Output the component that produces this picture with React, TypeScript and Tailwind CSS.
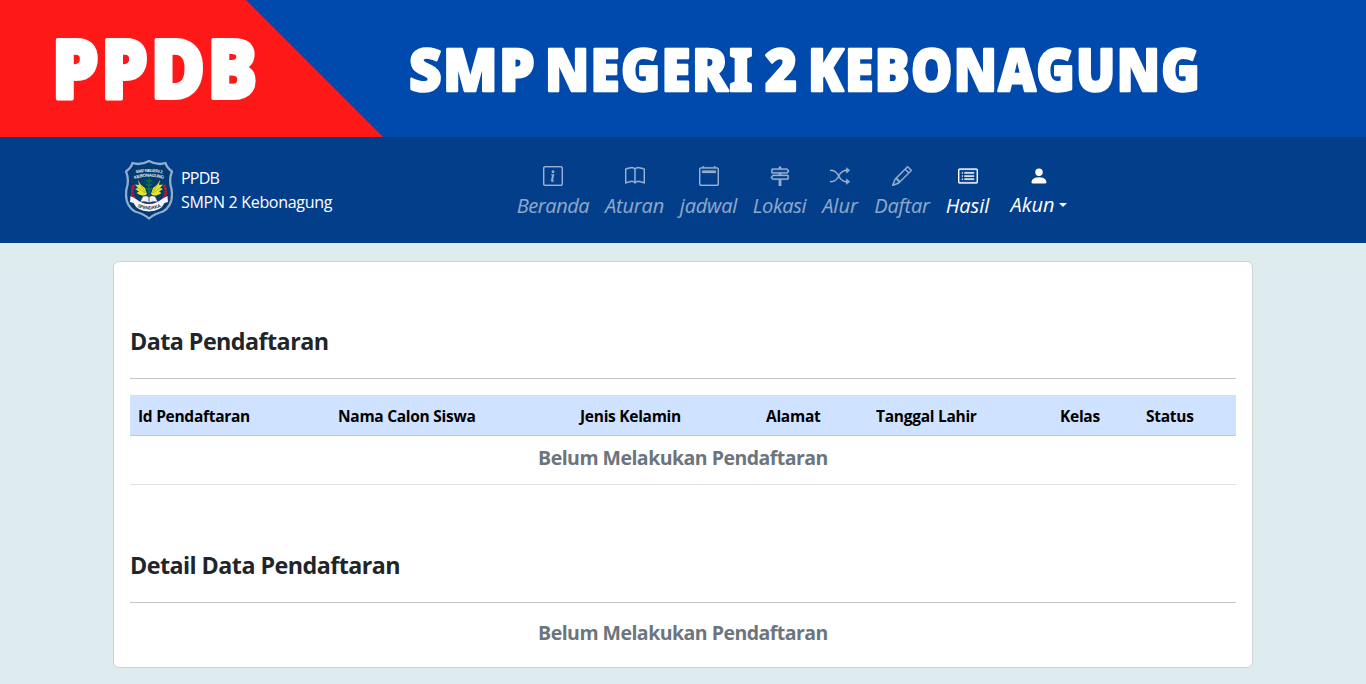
import type { ReactNode } from "react";
import {
  BsBook,
  BsCalendar2,
  BsCardList,
  BsInfoSquare,
  BsPencil,
  BsPersonFill,
  BsShuffle,
  BsSignpost2,
} from "react-icons/bs";

function Banner() {
  return (
    <svg
      viewBox="0 0 1366 137"
      className="block h-[137px] w-full bg-[#004aad] font-['Noto_Sans',sans-serif] font-black"
      role="img"
      aria-label="PPDB SMP Negeri 2 Kebonagung"
    >
      <polygon points="0,0 246,0 383,137 0,137" fill="#ff1818" />
      <g fill="#fff" stroke="#fff" strokeLinejoin="round">
        <text x="52" y="97.500" fontSize="82" strokeWidth="4" letterSpacing="3" textLength="208" lengthAdjust="spacingAndGlyphs">PPDB</text>
        <g fontSize="59" strokeWidth="2.500">
          <text x="409" y="90.500" letterSpacing="1.500" textLength="127" lengthAdjust="spacingAndGlyphs">SMP</text>
          <text x="545" y="90.500" letterSpacing="1.500" textLength="209" lengthAdjust="spacingAndGlyphs">NEGERI</text>
          <text x="765" y="90.500" textLength="32" lengthAdjust="spacingAndGlyphs">2</text>
          <text x="808" y="90.500" letterSpacing="1.500" textLength="393" lengthAdjust="spacingAndGlyphs">KEBONAGUNG</text>
        </g>
      </g>
    </svg>
  );
}

const shield =
  "M7.5 3.2 Q16 5.5 24 1 Q32 5.5 40.500 3.200 Q42 8 47 11.500 Q43.500 20 46.500 29 Q49 45 38 51.500 Q29 54 24 58.500 Q19 54 10 51.500 Q-1 45 1.500 29 Q4.500 20 1 11.500 Q6 8 7.500 3.200Z";

function Crest() {
  return (
    <svg viewBox="0 0 48 60" className="h-[60px] w-12 shrink-0" aria-hidden="true">
      <defs>
        <path id="crest-top" d="M8 14 Q24 10 40 14" />
        <path id="crest-mid" d="M6.500 20 Q24 13.500 41.500 20" />
        <path id="crest-ribbon" d="M9 43.500 Q24 53 39 43.500" />
      </defs>
      <path d={shield} fill="#043a70" stroke="#8fadd2" strokeWidth="2.300" />
      <g className="font-['Liberation_Sans',sans-serif] font-bold" fill="#e5edf7">
        <text fontSize="4.200" textAnchor="middle">
          <textPath href="#crest-top" startOffset="50%">SMP NEGERI 2</textPath>
        </text>
        <text fontSize="4.400" textAnchor="middle">
          <textPath href="#crest-mid" startOffset="50%">KEBONAGUNG</textPath>
        </text>
      </g>
      <g fill="none" stroke="#d31932" strokeWidth="2.600" strokeDasharray="2.200 .7">
        <path d="M9 25 Q5 33 10 39" />
        <path d="M39 25 Q43 33 38 39" />
      </g>
      <path d="M24 18v19M24 22l-3-2M24 22l3-2M24 26l-3-2M24 26l3-2M24 30l-3-2M24 30l3-2" stroke="#087943" strokeWidth="1.300" />
      <path d="M13 19 Q14 24 20 28 L22 34 Q19 37 14 34.500 L11.500 33 L14 31.500 L10 29 L13 28 L10 24.500 L14 25Z" fill="#e6e42c" />
      <path d="M35 19 Q34 24 28 28 L26 34 Q29 37 34 34.500 L36.500 33 L34 31.500 L38 29 L35 28 L38 24.500 L34 25Z" fill="#e6e42c" />
      <path d="M13 21l8 12M12 27l8 6M35 21l-8 12M36 27l-8 6" stroke="#8aa42d" strokeWidth=".6" />
      <path d="M18 36q4-1 6 1 2-2 6-1l3 6q-6-1-9 1-3-2-9-1Z" fill="#f0f2f5" stroke="#273750" strokeWidth=".7" />
      <path d="M24 37v6" stroke="#273750" strokeWidth=".8" />
      <path d="M5.500 36 L11 39 Q17 44 24 44 Q31 44 37 39 L42.500 36 L43 42 L39.500 43 Q36 51 24 51.500 Q12 51 8.500 43 L5 42Z" fill="#f5f6f7" />
      <text fontSize="4.600" className="font-['Liberation_Sans',sans-serif] font-bold" fill="#26303c" textAnchor="middle" dy="1.200">
        <textPath href="#crest-ribbon" startOffset="50%">SPENDAKA</textPath>
      </text>
    </svg>
  );
}

const navItems = [
  { label: "Beranda", Icon: BsInfoSquare, box: "w-[88px] tracking-[-0.45px]" },
  { label: "Aturan", Icon: BsBook, box: "w-[75px] tracking-[-0.15px]" },
  { label: "jadwal", Icon: BsCalendar2, box: "w-[73px] tracking-[-0.2px]" },
  { label: "Lokasi", Icon: BsSignpost2, box: "w-[69px] tracking-[-0.35px]" },
  { label: "Alur", Icon: BsShuffle, box: "w-[52px] tracking-normal" },
  { label: "Daftar", Icon: BsPencil, box: "w-[72px] tracking-[-0.2px]" },
  { label: "Hasil", Icon: BsCardList, box: "w-[59px] tracking-[-0.05px]" },
];

function Navbar() {
  return (
    <header className="flex h-[106px] bg-[#023e8a] pl-[125px]">
      <a className="flex w-[384px] items-center gap-2 text-base leading-6 tracking-[-0.3px] text-white">
        <Crest />
        <span>
          <span className="tracking-[-0.8px]">PPDB</span>
          <br />
          SMPN 2 Kebonagung
        </span>
      </a>
      <nav className="flex pt-[29px] text-xl leading-[30px] italic">
        {navItems.map(({ label, Icon, box }) => (
          <a
            key={label}
            className={`flex flex-col items-center whitespace-nowrap ${box} ${label === "Hasil" ? "text-white" : "text-white/55"}`}
          >
            <Icon className="mb-[5px] size-5" stroke="currentColor" strokeWidth={0.25} />
            <span>{label}</span>
          </a>
        ))}
        <a className="ml-1 flex w-[75px] flex-col items-center text-white">
          <BsPersonFill className="mb-1 size-5" />
          <span className="flex items-center gap-1 tracking-normal">
            Akun
            <i className="border-x-4 border-t-4 border-x-transparent border-t-white" />
          </span>
        </a>
      </nav>
    </header>
  );
}

function SectionTitle({ children }: { children: ReactNode }) {
  return (
    <h2 className="h-[53px] border-b border-[#c5c6c7] pt-px text-[23.3px] leading-[29px] font-bold tracking-[-0.55px] text-[#212529]">
      {children}
    </h2>
  );
}

const columns = [
  { label: "Id Pendaftaran", box: "w-[200px]" },
  { label: "Nama Calon Siswa", box: "w-[242px]" },
  { label: "Jenis Kelamin", box: "w-[186px]" },
  { label: "Alamat", box: "w-[110px]" },
  { label: "Tanggal Lahir", box: "w-[184px]" },
  { label: "Kelas", box: "w-[86px]" },
  { label: "Status", box: "w-[98px]" },
];

export default function App() {
  return (
    <div className="h-[684px] overflow-hidden bg-[#deebef] font-['Open_Sans','Noto_Sans',sans-serif]">
      <Banner />
      <Navbar />
      <main className="mx-auto mt-[18px] h-[407px] w-[1140px] rounded-md border border-[#cfd2d4] bg-white px-4 pt-16">
        <SectionTitle>Data Pendaftaran</SectionTitle>
        <table className="mt-4 w-full table-fixed border-separate border-spacing-0">
          <thead>
            <tr className="text-left text-[15.5px] leading-6 text-black">
              {columns.map(({ label, box }) => (
                <th
                  key={label}
                  className={`h-[41px] border-b border-[#b3c8e6] bg-[#cfe2ff] px-2 pt-0.5 pb-0 font-bold tracking-[-0.28px] whitespace-nowrap ${box}`}
                >
                  {label}
                </th>
              ))}
            </tr>
          </thead>
          <tbody>
            <tr>
              <td
                colSpan={7}
                className="h-[49px] border-b border-[#dee2e6] pb-1 text-center text-[19.5px] leading-6 font-bold tracking-[-0.52px] text-[#6c757d]"
              >
                Belum Melakukan Pendaftaran
              </td>
            </tr>
          </tbody>
        </table>
        <div className="mt-[65px]">
          <SectionTitle>Detail Data Pendaftaran</SectionTitle>
          <p className="mt-[18px] text-center text-[19.5px] leading-6 font-bold tracking-[-0.52px] text-[#6c757d]">
            Belum Melakukan Pendaftaran
          </p>
        </div>
      </main>
    </div>
  );
}
